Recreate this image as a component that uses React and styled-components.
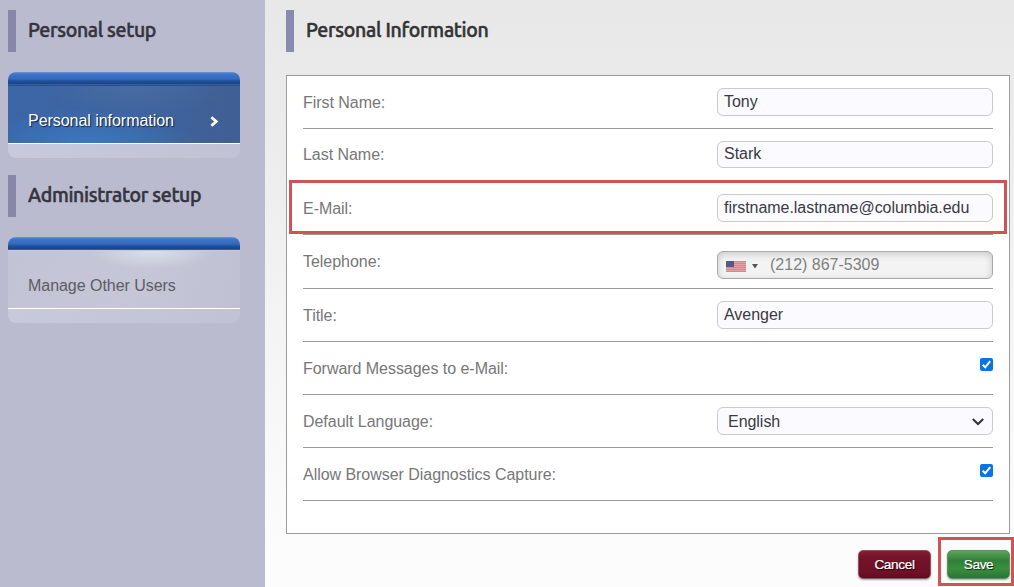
import React from 'react';
import styled, {createGlobalStyle} from 'styled-components';

const GlobalStyle = createGlobalStyle`
  * {
    box-sizing: border-box;
  }
  body {
    margin: 0;
    overflow: hidden;
    font-family: "Liberation Sans", Arial, sans-serif;
    font-size: 16px;
    letter-spacing: -0.04px;
  }
`;

const menus = [
  {title: 'Personal setup', item: 'Personal information', active: true},
  {title: 'Administrator setup', item: 'Manage Other Users', active: false},
];

const stripes = [1, 3, 5, 7, 9];

function Flag() {
  return (
    <svg width="20" height="11" viewBox="0 0 20 11">
      <rect width="20" height="11" fill="#d88692"/>
      {stripes.map(y => <rect key={y} y={y} width="20" height="1" fill="#e3a0ab"/>)}
      <rect width="8" height="6" fill="#57578c"/>
    </svg>
  );
}

function Check() {
  return (
    <CheckBox role="checkbox" aria-checked="true">
      <svg width="13" height="13" viewBox="0 0 13 13">
        <path d="M2.7 6.8L5.2 9.3L10.2 3.2" fill="none" stroke="#fff" strokeWidth="2"/>
      </svg>
    </CheckBox>
  );
}

function Field({label, tall, short, children}) {
  return (
    <Row $tall={tall}>
      <Label $short={short}>{label}</Label>
      {children}
    </Row>
  );
}

function App() {
  return (
    <Page>
      <GlobalStyle/>
      <Sidebar>
        {menus.map(menu => (
          <MenuSection key={menu.title}>
            <Heading>{menu.title}</Heading>
            <Menu>
              <MenuCap/>
              <MenuItem $active={menu.active}>
                <span>{menu.item}</span>
                {menu.active && (
                  <svg width="9" height="11" viewBox="0 0 9 11">
                    <path d="M1.4 1.2L6.2 5.5L1.4 9.8" fill="none" stroke="#fff" strokeWidth="2.8"/>
                  </svg>
                )}
              </MenuItem>
              <MenuFoot/>
            </Menu>
          </MenuSection>
        ))}
      </Sidebar>
      <Main>
        <Heading $main>Personal Information</Heading>
        <Panel>
          <Field label="First Name:"><Input>Tony</Input></Field>
          <Field label="Last Name:" short><Input $short>Stark</Input></Field>
          <Field label="E-Mail:">
            <Input>firstname.lastname@columbia.edu</Input>
            <RowHighlight/>
          </Field>
          <Field label="Telephone:" tall>
            <PhoneInput>
              <Flag/>
              <svg width="6" height="5" viewBox="0 0 6 5">
                <path d="M0 0H6L3 4.6Z" fill="#555"/>
              </svg>
              <span>(212) 867-5309</span>
            </PhoneInput>
          </Field>
          <Field label="Title:"><Input>Avenger</Input></Field>
          <Field label="Forward Messages to e-Mail:"><Check/></Field>
          <Field label="Default Language:">
            <Select>
              <span>English</span>
              <svg width="12" height="8" viewBox="0 0 12 8">
                <path d="M0.8 1L6 6L11.2 1" fill="none" stroke="#333" strokeWidth="2"/>
              </svg>
            </Select>
          </Field>
          <Field label="Allow Browser Diagnostics Capture:"><Check/></Field>
        </Panel>
        <Actions>
          <CancelButton>Cancel</CancelButton>
          <SaveWrapper>
            <SaveButton>Save</SaveButton>
            <SaveHighlight/>
          </SaveWrapper>
        </Actions>
      </Main>
    </Page>
  );
}

const Page = styled.div`
  display: flex;
  width: 1014px;
  height: 587px;
  overflow: hidden;
`;

const Sidebar = styled.aside`
  width: 265px;
  flex: none;
  padding: 10px 25px 0 8px;
  background: #babbcf;
`;

const MenuSection = styled.section`
  height: 165px;
`;

const Heading = styled.h2`
  height: 42px;
  margin: 0;
  padding-left: 12px;
  border-left: 8px solid ${props => props.$main ? '#8a89af' : '#8887a8'};
  font-family: Ubuntu, "Noto Sans", sans-serif;
  font-size: 19.5px;
  font-weight: 500;
  line-height: 40px;
  letter-spacing: ${props => props.$main ? '-0.3px' : '-0.33px'};
  color: ${props => props.$main ? '#333' : '#34343f'};
  -webkit-text-stroke: 0.5px;
  white-space: nowrap;
`;

const Menu = styled.div`
  width: 232px;
  margin-top: 20px;
`;

const MenuCap = styled.div`
  height: 13px;
  border-radius: 8px 8px 0 0;
  background: linear-gradient(#6b93d4 0, #3c75cb 2px, #346abd 7px, #205099 9px, #194488 12px, #5574a8 13px);
`;

const MenuItem = styled.div`
  display: flex;
  align-items: center;
  justify-content: space-between;
  height: 59px;
  padding: 13px 21px 0 20px;
  border-bottom: 1px solid #fff;
  border-top: 1px solid ${props => props.$active ? '#27508f' : '#c4c9da'};
  color: ${props => props.$active ? '#fff' : '#5c5c66'};
  text-shadow: ${props => props.$active ? '1px 1px 1px #10203c' : 'none'};
  background: ${props => props.$active
    ? 'radial-gradient(ellipse 110px 34px at 34% 100%, rgba(57, 126, 205, 0.75), transparent), radial-gradient(ellipse 90px 30px at 55% 0, rgba(85, 120, 165, 0.45), transparent), linear-gradient(90deg, #3b66a7, #3e639d 60%, #405f94)'
    : 'radial-gradient(ellipse 62px 18px at 62% 0, rgba(222, 229, 238, 0.85), transparent), linear-gradient(105deg, #c2c3d4, #c5c6d7 55%, #bfc0d2)'};
`;

const MenuFoot = styled.div`
  height: 14px;
  border-radius: 0 0 8px 8px;
  background: linear-gradient(90deg, #c8c9da, #c1c2d4);
`;

const Main = styled.main`
  flex: 1;
  min-width: 0;
  padding: 10px 0 0 21px;
  background: linear-gradient(#e8e8e8, #ebebeb 20%, #f5f5f5 60%, #fcfcfc 95%);
`;

const Panel = styled.div`
  width: 724px;
  height: 459px;
  margin-top: 23px;
  padding: 0 16px;
  border: 1px solid #9b9b9f;
  background: #fff;
`;

const Row = styled.div`
  position: relative;
  display: flex;
  justify-content: space-between;
  align-items: flex-start;
  height: ${props => props.$tall ? 54 : 53}px;
  padding-top: 12px;
  border-bottom: 1px solid #9a9a9e;
`;

const Label = styled.label`
  line-height: ${props => props.$short ? 28 : 30}px;
  color: #777;
`;

const Input = styled.div`
  display: flex;
  align-items: center;
  width: 276px;
  height: ${props => props.$short ? 27 : 28}px;
  padding: 0 6px;
  padding-bottom: ${props => props.$short ? 2 : 1}px;
  border: 1px solid #c9c9cf;
  border-radius: 6px;
  background: #fafaff;
  color: #3a3a40;
`;

const PhoneInput = styled(Input)`
  margin-top: 4px;
  padding-left: 8px;
  border-color: #a9a9a9;
  background: #f3f3f3;
  box-shadow: inset 0 2px 7px rgba(0, 0, 0, 0.18);
  color: #808080;
  letter-spacing: 0;
  svg {
    margin-top: 3px;
  }
  svg + svg {
    margin-left: 6px;
    margin-right: 12px;
  }
`;

const Select = styled(Input)`
  justify-content: space-between;
  padding: 2px 8px 0 10px;
`;

const CheckBox = styled.div`
  width: 13px;
  height: 13px;
  margin-top: 4px;
  border-radius: 2px;
  background: #0b74e5;
  svg {
    display: block;
  }
`;

const RowHighlight = styled.div`
  position: absolute;
  top: -2px;
  left: -14px;
  width: 718px;
  height: 54px;
  border: 3px solid #cd5555;
`;

const Actions = styled.div`
  display: flex;
  justify-content: flex-end;
  gap: 16px;
  padding: 16px 4px 0 0;
`;

const Button = styled.button`
  height: 29px;
  padding: 0 0 1px;
  border-radius: 5px;
  font-family: inherit;
  font-size: 13.6px;
  letter-spacing: -0.35px;
  color: #fff;
  -webkit-text-stroke: 0.2px;
  text-shadow: 1px 1px 1px rgba(0, 0, 0, 0.8);
  box-shadow: 0 1px 2px rgba(0, 0, 0, 0.35);
`;

const CancelButton = styled(Button)`
  width: 73px;
  border: 1px solid #8f5563;
  background: linear-gradient(#8a1c32, #74122a 25%, #701027 80%, #5e0c20);
`;

const SaveWrapper = styled.div`
  position: relative;
`;

const SaveButton = styled(Button)`
  width: 63px;
  border: 1px solid #5c9163;
  background: linear-gradient(#5da55a, #30803a 35%, #398f3d 65%, #2c7534);
`;

const SaveHighlight = styled.div`
  position: absolute;
  top: -13px;
  left: -9px;
  width: 76px;
  height: 49px;
  border: 3px solid #cd5555;
`;

export default App;
